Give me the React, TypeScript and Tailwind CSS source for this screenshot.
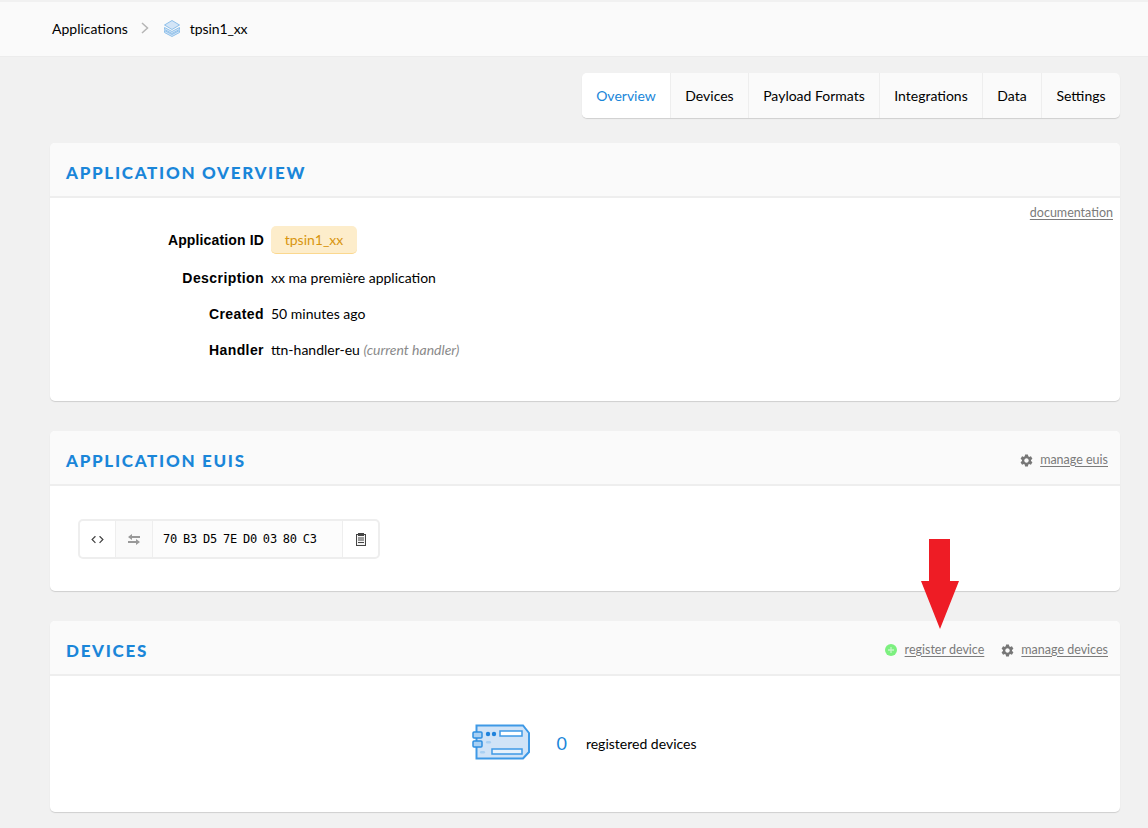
import { ReactNode } from 'react';
import { MdSettings, MdCode } from 'react-icons/md';

const tabs = [
  { label: 'Overview', w: 'w-[89px]' },
  { label: 'Devices', w: 'w-[78px]' },
  { label: 'Payload Formats', w: 'w-[131px]' },
  { label: 'Integrations', w: 'w-[103px]' },
  { label: 'Data', w: 'w-[59px]' },
  { label: 'Settings', w: 'w-[78px]' },
];

const rows = [
  { label: 'Description', value: <span>xx ma première application</span> },
  { label: 'Created', value: <span>50 minutes ago</span> },
  {
    label: 'Handler',
    value: (
      <span>
        ttn-handler-eu <em className="text-[#8a8a8a]">(current handler)</em>
      </span>
    ),
  },
];

function StackIcon() {
  return (
    <svg width="18" height="18" viewBox="0 0 18 18" className="shrink-0">
      <path d="M1.500 11.500 9 15.500l7.500-4v2L9 17.500l-7.500-4z" fill="#d3e5f7" stroke="#8fc0ea" strokeWidth="1" strokeLinejoin="round" />
      <path d="M1.500 8.500 9 12.500l7.500-4v2L9 14.500l-7.500-4z" fill="#d3e5f7" stroke="#8fc0ea" strokeWidth="1" strokeLinejoin="round" />
      <path d="M9 1.500 16.500 6 9 10.500 1.500 6z" fill="#d3e5f7" stroke="#8fc0ea" strokeWidth="1" strokeLinejoin="round" />
    </svg>
  );
}

function SwapIcon() {
  return (
    <svg width="12" height="11" viewBox="0 0 12 11" fill="#999">
      <polygon points="0,3 4,0 4,2 12,2 12,4 4,4 4,6" />
      <polygon points="12,8 8,5 8,7 0,7 0,9 8,9 8,11" />
    </svg>
  );
}

function ClipboardIcon() {
  return (
    <svg width="10" height="13" viewBox="0 0 10 13" fill="none" stroke="#444" strokeWidth="1">
      <rect x="0.500" y="1.500" width="9" height="11" fill="#f4f4f4" />
      <rect x="2.500" y="0.500" width="5" height="2" fill="#444" />
      <path d="M2 5h6M2 7h6M2 9.500h6" />
    </svg>
  );
}

function BoardIcon() {
  return (
    <svg width="58" height="36" viewBox="0 0 58 36" className="-mt-[2px] shrink-0">
      <path d="M4.500 1.500H51L57 9v19l-6 6.500H4.500z" fill="#d0e3f7" stroke="#3e99e6" strokeWidth="2" />
      <rect x="1" y="8" width="9" height="6" rx="1" fill="#a9d0f3" stroke="#2f8fe0" strokeWidth="1.500" />
      <rect x="1" y="17" width="9" height="6" rx="1" fill="#a9d0f3" stroke="#2f8fe0" strokeWidth="1.500" />
      <circle cx="16" cy="10" r="2.200" fill="#1f82dc" />
      <circle cx="22" cy="10" r="2.200" fill="#1f82dc" />
      <rect x="28" y="7" width="22" height="5" fill="#fff" stroke="#3e99e6" strokeWidth="1.500" />
      <rect x="20" y="25" width="30" height="5" fill="#e8f2fc" stroke="#3e99e6" strokeWidth="1.500" />
      <rect x="14" y="17" width="5" height="2.500" rx="1.200" fill="#a9d0f3" />
      <rect x="8" y="27" width="5" height="2.500" rx="1.200" fill="#a9d0f3" />
    </svg>
  );
}

function PlusDot() {
  return (
    <svg width="12" height="12" viewBox="0 0 12 12" className="mr-[2px] shrink-0">
      <circle cx="6" cy="6" r="6" fill="#7cf07f" />
      <path d="M6 3v6M3 6h6" stroke="#c4f5c6" strokeWidth="1.300" />
    </svg>
  );
}

function ActionLink({ icon, children }: { icon: ReactNode; children: ReactNode }) {
  return (
    <span className="mt-[5px] flex items-center gap-[6px] text-[12.5px] text-[#7b7b7b]">
      {icon}
      <span className="underline underline-offset-2">{children}</span>
    </span>
  );
}

function Gear() {
  return <MdSettings className="shrink-0 text-[#777]" size={15} />;
}

function Card({
  title,
  actions,
  className,
  children,
}: {
  title: string;
  actions?: ReactNode;
  className: string;
  children: ReactNode;
}) {
  return (
    <section className={`overflow-hidden rounded-[5px] bg-white shadow-[0_1px_1px_rgba(0,0,0,0.14)] ${className}`}>
      <header className="flex h-[55px] items-center justify-between border-b-2 border-[#eeeeee] bg-[#fafafa] pr-[12px] pl-[16px]">
        <h2 className="mt-[6px] font-['Lato',sans-serif] text-[17px] leading-none font-black tracking-[0.1em] text-[#1a86d9] uppercase">
          {title}
        </h2>
        {actions}
      </header>
      {children}
    </section>
  );
}

export default function App() {
  return (
    <div className="relative h-[828px] overflow-hidden bg-[#f1f1f1] pt-[2px] font-['Lato',sans-serif] text-[14px] text-black">
      <nav className="flex h-[55px] items-center border-b border-[#ececec] bg-[#fafafa] pb-[2px] pl-[52px]">
        <span>Applications</span>
        <svg width="8" height="12" viewBox="0 0 8 12" fill="none" stroke="#b5b5b5" strokeWidth="1.500" className="mr-[14px] ml-[13px]">
          <path d="M1 1l5.500 5L1 11" />
        </svg>
        <StackIcon />
        <span className="ml-[9px] tracking-[-0.1px]">tpsin1_xx</span>
      </nav>

      <main className="pr-[28px] pl-[50px]">
        <div className="mt-[16px] flex justify-end">
          <div className="flex h-[45px] overflow-hidden rounded-[5px] bg-[#fafafa] shadow-[0_1px_1px_rgba(0,0,0,0.14)]">
            {tabs.map((t, i) => (
              <div
                key={t.label}
                className={`flex items-center justify-center border-r border-[#eeeeee] last:border-r-0 ${t.w} ${
                  i === 0 ? 'bg-white text-[#1a86d9]' : ''
                }`}
              >
                {t.label}
              </div>
            ))}
          </div>
        </div>

        <Card title="Application Overview" className="mt-[25px] h-[258px]">
          <div className="flex justify-end pt-[6px] pr-[7px] text-[12.5px] leading-[18px] text-[#7b7b7b]">
            <span className="underline underline-offset-2">documentation</span>
          </div>
          <div>
            <div className="flex h-[36px] items-center">
              <span className="w-[214px] text-right font-['Liberation_Sans',sans-serif] font-bold tracking-[0.01em]">
                Application ID
              </span>
              <span className="ml-[7px] flex h-[28px] w-[86px] items-center justify-center rounded-[5px] border-b border-[#fbd88f] bg-[#fdedcb] text-[#d8950f]">
                tpsin1_xx
              </span>
            </div>
            <div className="pt-[1px]">
              {rows.map((r) => (
                <div key={r.label} className="flex h-[36px] items-center">
                  <span className="mt-[2px] w-[214px] text-right font-['Liberation_Sans',sans-serif] font-bold tracking-[0.03em]">
                    {r.label}
                  </span>
                  <span className="ml-[7px]">{r.value}</span>
                </div>
              ))}
            </div>
          </div>
        </Card>

        <Card
          title="Application EUIs"
          className="mt-[30px] h-[160px]"
          actions={<ActionLink icon={<Gear />}>manage euis</ActionLink>}
        >
          <div className="pt-[33px] pl-[28px]">
            <div className="flex h-[40px] w-[302px] overflow-hidden rounded-[5px] border-2 border-[#eeeeee] bg-white">
              <div className="flex w-[36px] items-center justify-center border-r border-[#eeeeee]">
                <MdCode size={15} className="text-[#444]" />
              </div>
              <div className="flex w-[37px] items-center justify-center border-r border-[#eeeeee] bg-[#fafafa]">
                <SwapIcon />
              </div>
              <div className="flex w-[190px] items-center border-r border-[#eeeeee] bg-[#fcfcfc] pl-[10px] font-['DejaVu_Sans_Mono',monospace] text-[12px] tracking-[-0.2px] whitespace-pre [word-spacing:-1.1px]">
                70 B3 D5 7E D0 03 80 C3
              </div>
              <div className="flex flex-1 items-center justify-center">
                <ClipboardIcon />
              </div>
            </div>
          </div>
        </Card>

        <Card
          title="Devices"
          className="mt-[30px] h-[191px]"
          actions={
            <div className="flex items-center gap-[16px]">
              <ActionLink icon={<PlusDot />}>register device</ActionLink>
              <ActionLink icon={<Gear />}>manage devices</ActionLink>
            </div>
          }
        >
          <div className="flex items-center justify-center pt-[50px] pr-[1px]">
            <BoardIcon />
            <span className="ml-[26px] text-[18px] text-[#1a86d9]">0</span>
            <span className="ml-[19px]">registered devices</span>
          </div>
        </Card>
      </main>

      <svg width="38" height="90" viewBox="0 0 38 90" className="absolute top-[539px] left-[921px]">
        <path d="M8 0h21v42h9L19 90 0 42h8z" fill="#ee1c25" />
      </svg>
    </div>
  );
}
